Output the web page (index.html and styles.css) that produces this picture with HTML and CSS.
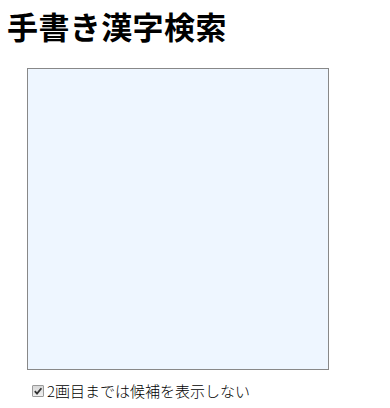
FILE: index.html
```html
<!DOCTYPE html>
<html lang="ja">
<head>
<meta charset="utf-8">
<title>手書き漢字検索</title>
<link rel="stylesheet" href="styles.css">
</head>
<body>
<h1 class="title">手書き漢字検索</h1>
<div class="pad">
  <div class="canvas"></div>
</div>
<label class="opt"><input type="checkbox" class="chk" checked>2画目までは候補を表示しない</label>
</body>
</html>
```
FILE: styles.css
```css
html, body {
  margin: 0;
  padding: 0;
  background: #fff;
}
body {
  padding: 0 8px;
  font-family: "Noto Sans CJK JP", "Noto Sans", sans-serif;
  color: #000;
}
.title {
  margin: 0 0 0 -1px;
  padding-top: 4px;
  font-size: 31px;
  line-height: 44px;
  font-weight: bold;
  letter-spacing: 0.4px;
}
.pad {
  padding: 20px 0 0 19px;
}
.canvas {
  width: 300px;
  height: 300px;
  border: 1px solid #888;
  background: #eef6ff;
}
.opt {
  display: flex;
  align-items: center;
  margin: 11px 0 0 24px;
  font-size: 15px;
  line-height: 20px;
  font-weight: 300;
  color: #000;
}
.chk {
  appearance: none;
  -webkit-appearance: none;
  width: 12px;
  height: 12px;
  margin: 0 3px 0 0;
  border: 1px solid #9a9a9a;
  border-radius: 1px;
  background-image: url("data:image/svg+xml,%3Csvg xmlns='http://www.w3.org/2000/svg' viewBox='0 0 10 10'%3E%3Cpath d='M1.8 5.2 L4 7.6 L8.4 2.2' fill='none' stroke='%23333' stroke-width='1.8'/%3E%3C/svg%3E"), linear-gradient(#d8d8d8, #f0f0f0);
  background-size: 100% 100%;
}
```
